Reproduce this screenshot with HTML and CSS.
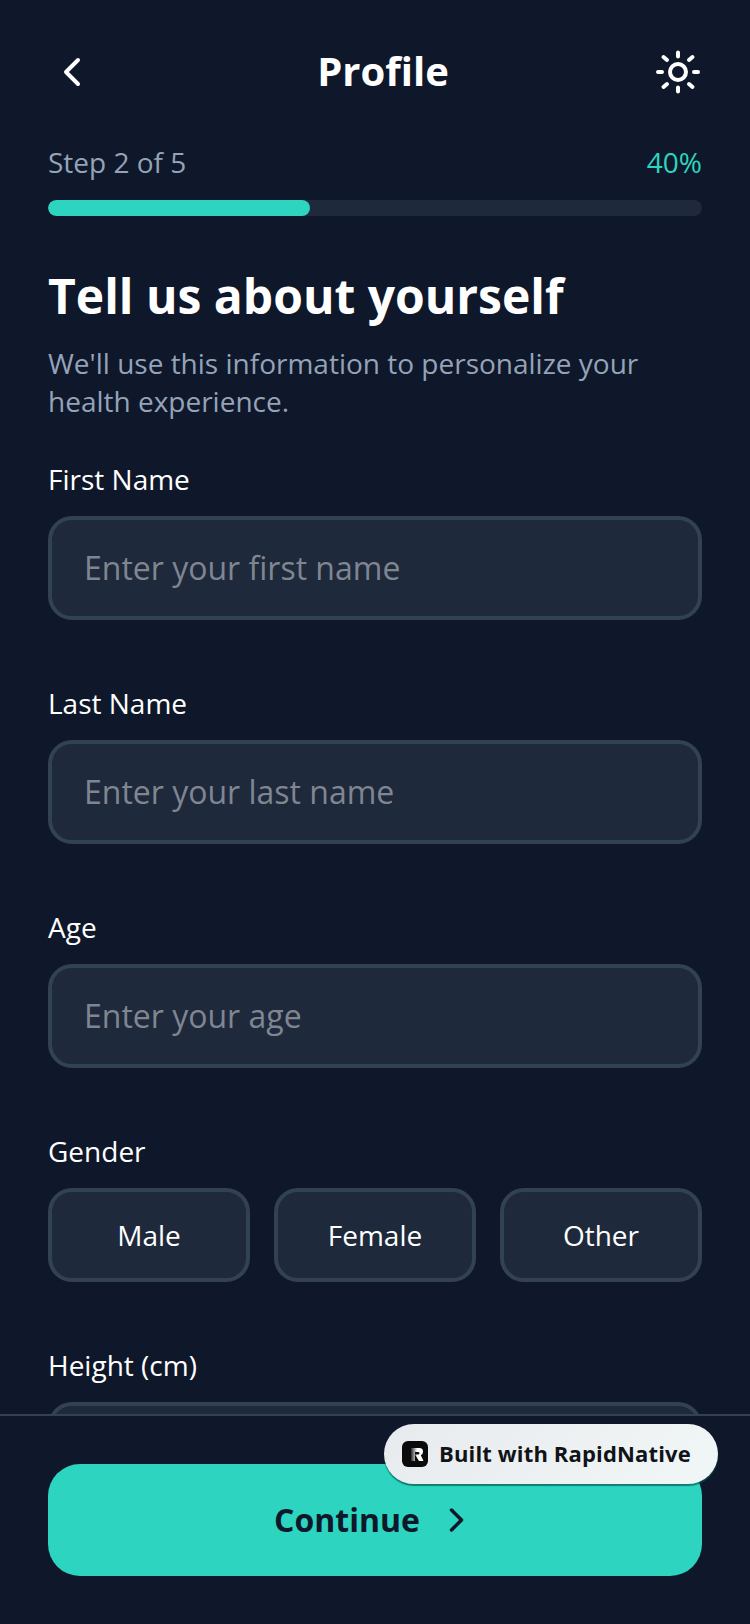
FILE: index.html
```html
<!DOCTYPE html>
<html lang="en">
<head>
<meta charset="utf-8">
<title>Profile</title>
<link rel="stylesheet" href="styles.css">
</head>
<body>
<div class="app">
  <main class="main">
    <header class="header">
      <div class="back"><svg width="48" height="48" viewBox="0 0 48 48" fill="none" stroke="#fff" stroke-width="4" stroke-linecap="round" stroke-linejoin="round"><path d="M30 12 L18 24 L30 36"/></svg></div>
      <h1 class="header-title">Profile</h1>
      <svg class="sun" width="48" height="48" viewBox="0 0 48 48" fill="none" stroke="#fff" stroke-width="4" stroke-linecap="round"><circle cx="24" cy="24" r="8"/><path d="M24 4.500v4M24 39.500v4M4 24h4M40 24h4M9.500 9l3.500 3M35 36l3.500 3M9.500 39l3.500-3M35 12l3.500-3"/></svg>
    </header>
    <div class="progress-row"><span class="step">Step 2 of 5</span><span class="pct">40%</span></div>
    <div class="track"><div class="fill" style="width:40%"></div></div>
    <h2 class="title">Tell us about yourself</h2>
    <p class="sub">We'll use this information to personalize your health experience.</p>
    <div class="fields">
      <div class="field"><label class="label">First Name</label><div class="input">Enter your first name</div></div>
      <div class="field"><label class="label">Last Name</label><div class="input">Enter your last name</div></div>
      <div class="field"><label class="label">Age</label><div class="input">Enter your age</div></div>
      <div class="field"><label class="label">Gender</label>
        <div class="choices"><div class="choice">Male</div><div class="choice">Female</div><div class="choice">Other</div></div>
      </div>
      <div class="field"><label class="label">Height (cm)</label><div class="input"></div></div>
    </div>
  </main>
  <footer class="footer">
    <button class="continue"><span class="continue-text">Continue</span>
      <svg width="40" height="40" viewBox="0 0 40 40" fill="none" stroke="#0f172a" stroke-width="3.500" stroke-linecap="round" stroke-linejoin="round"><path d="M15.500 10 L25.500 20 L15.500 30"/></svg>
    </button>
    <div class="badge">
      <svg class="logo" width="26" height="26" viewBox="0 0 26 26"><defs><linearGradient id="rg" x1="0" x2="1" y1="0" y2="0"><stop offset="0" stop-color="#2a2a2c"/><stop offset=".5" stop-color="#fff"/></linearGradient></defs><rect width="26" height="26" rx="6" fill="#0b0b0c"/><path d="M9 7h8.500a3.500 3.500 0 0 1 3.500 3.500v.5a3.500 3.500 0 0 1-2.200 3.200l2.700 5.800h-4.500l-4-6.500h3.200a1.200 1.200 0 0 0 0-2.500H13v9H9z" fill="url(#rg)"/></svg>
      <span class="badge-text">Built with RapidNative</span>
    </div>
  </footer>
</div>
</body>
</html>
```
FILE: styles.css
```css
* { box-sizing: border-box; }
html, body { margin: 0; padding: 0; }
body { background: #0f172a; font-family: "Open Sans", sans-serif; }
.app { width: 750px; height: 1624px; display: flex; flex-direction: column; overflow: hidden; background: #0f172a; }
.main { height: 1414px; overflow: hidden; padding: 0 48px; flex: none; }
.header { height: 143px; display: flex; align-items: center; justify-content: space-between; }
.back { width: 64px; height: 48px; }
.header-title { margin: 0 0 1px; font-size: 40px; line-height: 48px; font-weight: 700; color: #fff; }
.progress-row { display: flex; justify-content: space-between; height: 38px; align-items: center; font-size: 28px; line-height: 38px; }
.step { color: #94a3b8; }
.pct { color: #2dd4bf; }
.track { height: 16px; margin-top: 19px; border-radius: 8px; background: #1e293b; overflow: hidden; }
.fill { height: 100%; background: #2dd4bf; border-radius: 8px; }
.title { margin: 48px 0 0; font-size: 48px; line-height: 64px; font-weight: 700; color: #fff; }
.sub { margin: 16px 0 0; font-size: 28px; line-height: 38px; color: #94a3b8; }
.fields { margin-top: 39px; display: flex; flex-direction: column; gap: 63px; }
.label { display: block; font-size: 28px; line-height: 40px; color: #fff; margin-bottom: 17px; }
.input { height: 104px; border: 4px solid #334155; border-radius: 24px; background: #1e293b; padding: 0 32px 2px; font-size: 32px; display: flex; align-items: center; color: #808691; }
.choices { display: flex; gap: 24px; }
.choice { flex: 1; height: 94px; border: 4px solid #334155; border-radius: 24px; background: #1e293b; display: flex; align-items: center; justify-content: center; font-size: 28px; color: #fff; }
.footer { position: relative; flex: 1; border-top: 2px solid #334155; padding: 48px 48px 0; background: #0f172a; }
.continue { width: 654px; height: 112px; border: 0; border-radius: 32px; background: #2dd4bf; display: flex; align-items: center; justify-content: center; gap: 16px; font-family: inherit; font-size: 32px; font-weight: 700; color: #0f172a; padding: 0; }
.continue-text { margin-bottom: 2px; }
.badge { position: absolute; left: 384px; top: 8px; width: 334px; height: 60px; border-radius: 30px; background: linear-gradient(135deg, #e8ebee, #f1f6f6); display: flex; align-items: center; gap: 11px; padding-left: 18px; font-size: 22px; letter-spacing: .15px; font-weight: 700; color: #101418; box-shadow: 0 2px 1px rgba(0,90,80,.7); }
.badge-text { margin-bottom: 2px; }
.logo { flex: none; }
```
